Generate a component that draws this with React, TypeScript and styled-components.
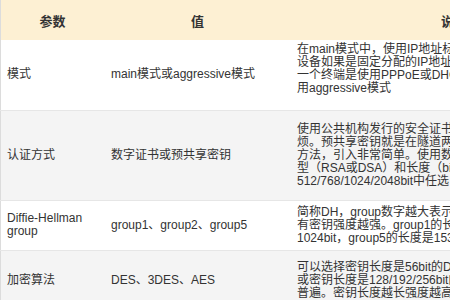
import React from 'react';
import styled, { createGlobalStyle } from 'styled-components';

const GlobalStyle = createGlobalStyle`
  body {
    margin: 0;
    overflow: hidden;
    background: #fff;
    font-family: "Liberation Sans", "Noto Sans CJK SC", sans-serif;
  }
`;

const Table = styled.table`
  width: 616px;
  table-layout: fixed;
  border-collapse: collapse;
  border-left: 1px solid #dcdcdc;
  font-size: 12px;
  color: #333;
`;

const HeadCell = styled.th<{ $w: number }>`
  width: ${props => props.$w}px;
  height: 40px;
  padding: 0;
  background: #fdf0d3;
  font-size: 13px;
  font-weight: 600;
  color: #333;
  text-align: center;
  vertical-align: middle;
`;

const Row = styled.tr<{ $h: number; $striped: boolean }>`
  height: ${props => props.$h}px;
  background: ${props => (props.$striped ? '#f4f4f4' : '#fff')};
  border-bottom: 1px solid #e6e6e6;
`;

const Cell = styled.td<{ $pad: number; $tail?: boolean }>`
  padding: 0 4px ${props => (props.$tail ? 11 : 0)}px ${props => props.$pad}px;
  line-height: 13px;
  vertical-align: middle;
  overflow: hidden;
`;

const Line = styled.span`
  display: block;
  white-space: nowrap;
`;

type Item = { name: string[]; value: string; desc: string[]; h: number; tail?: boolean };

const items: Item[] = [
  {
    name: ['模式'],
    value: 'main模式或aggressive模式',
    desc: [
      '在main模式中，使用IP地址标识身份，一端',
      '设备如果是固定分配的IP地址，另一端是',
      '一个终端是使用PPPoE或DHCP动态获取，需使',
      '用aggressive模式',
    ],
    h: 70,
    tail: true,
  },
  {
    name: ['认证方式'],
    value: '数字证书或预共享密钥',
    desc: [
      '使用公共机构发行的安全证书认证比较麻',
      '烦。预共享密钥就是在隧道两端配置相同密钥的',
      '方法，引入非常简单。使用数字证书需配置密钥类',
      '型（RSA或DSA）和长度（bit），长度可在',
      '512/768/1024/2048bit中任选',
    ],
    h: 90,
  },
  {
    name: ['Diffie-Hellman', 'group'],
    value: 'group1、group2、group5',
    desc: [
      '简称DH，group数字越大表示密钥越长，所',
      '有密钥强度越强。group1的长度是768bit，group2是',
      '1024bit，group5的长度是1536bit',
    ],
    h: 50,
  },
  {
    name: ['加密算法'],
    value: 'DES、3DES、AES',
    desc: [
      '可以选择密钥长度是56bit的DES、168bit的3DES',
      '或密钥长度是128/192/256bit的AES，AES最为',
      '普遍。密钥长度越长强度越高，但速度越慢',
    ],
    h: 60,
  },
];

function App() {
  return (
    <>
      <GlobalStyle />
      <Table>
        <thead>
          <tr>
            <HeadCell $w={103}>参数</HeadCell>
            <HeadCell $w={187}>值</HeadCell>
            <HeadCell $w={326}>说明</HeadCell>
          </tr>
        </thead>
        <tbody>
          {items.map((item, i) => (
            <Row key={item.value} $h={item.h} $striped={i % 2 === 1}>
              <Cell $pad={6}>
                {item.name.map(n => <Line key={n}>{n}</Line>)}
              </Cell>
              <Cell $pad={7}>{item.value}</Cell>
              <Cell $pad={6} $tail={item.tail}>
                {item.desc.map(d => <Line key={d}>{d}</Line>)}
              </Cell>
            </Row>
          ))}
        </tbody>
      </Table>
    </>
  );
}

export default App;
